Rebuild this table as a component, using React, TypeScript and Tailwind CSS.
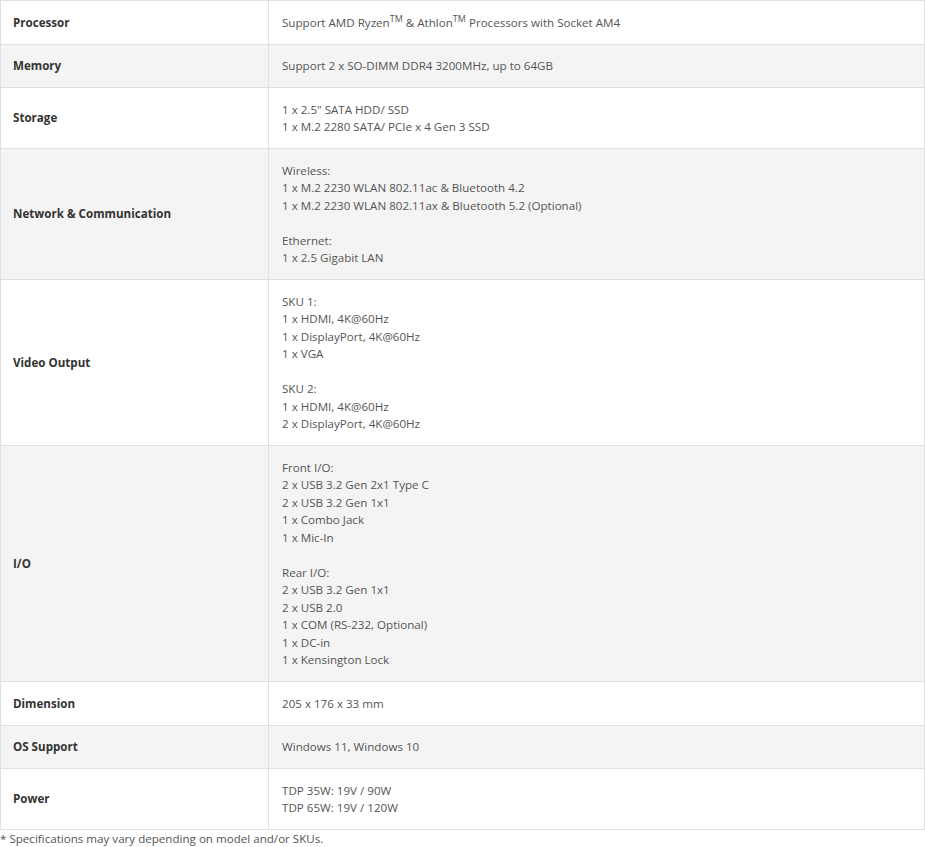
import React from "react";

type Spec = { label: string; value: React.ReactNode[] };

const specs: Spec[] = [
  {
    label: "Processor",
    value: [
      <>
        Support AMD Ryzen<sup className="text-[9px] leading-none">TM</sup> &amp; Athlon
        <sup className="text-[9px] leading-none">TM</sup> Processors with Socket AM4
      </>,
    ],
  },
  { label: "Memory", value: ["Support 2 x SO-DIMM DDR4 3200MHz, up to 64GB"] },
  {
    label: "Storage",
    value: ['1 x 2.5" SATA HDD/ SSD', "1 x M.2 2280 SATA/ PCIe x 4 Gen 3 SSD"],
  },
  {
    label: "Network & Communication",
    value: [
      "Wireless:",
      "1 x M.2 2230 WLAN 802.11ac & Bluetooth 4.2",
      "1 x M.2 2230 WLAN 802.11ax & Bluetooth 5.2 (Optional)",
      "",
      "Ethernet:",
      "1 x 2.5 Gigabit LAN",
    ],
  },
  {
    label: "Video Output",
    value: [
      "SKU 1:",
      "1 x HDMI, 4K@60Hz",
      "1 x DisplayPort, 4K@60Hz",
      "1 x VGA",
      "",
      "SKU 2:",
      "1 x HDMI, 4K@60Hz",
      "2 x DisplayPort, 4K@60Hz",
    ],
  },
  {
    label: "I/O",
    value: [
      "Front I/O:",
      "2 x USB 3.2 Gen 2x1 Type C",
      "2 x USB 3.2 Gen 1x1",
      "1 x Combo Jack",
      "1 x Mic-In",
      "",
      "Rear I/O:",
      "2 x USB 3.2 Gen 1x1",
      "2 x USB 2.0",
      "1 x COM (RS-232, Optional)",
      "1 x DC-in",
      "1 x Kensington Lock",
    ],
  },
  { label: "Dimension", value: ["205 x 176 x 33 mm"] },
  { label: "OS Support", value: ["Windows 11, Windows 10"] },
  { label: "Power", value: ["TDP 35W: 19V / 90W", "TDP 65W: 19V / 120W"] },
];

export default function App() {
  return (
    <div
      className="w-[925px] bg-white text-[11.6px] leading-[17.5px] text-[#555]"
      style={{ fontFamily: '"Open Sans", "Noto Sans", sans-serif' }}
    >
      <table className="w-full border-collapse">
        <tbody>
          {specs.map((s, i) => (
            <tr key={s.label} className={i % 2 === 1 ? "bg-[#f4f4f4]" : "bg-white"}>
              <td className="w-[268px] border border-[#e0e0e0] px-[12px] py-[12.5px] align-middle font-bold text-[#333]">
                {s.label}
              </td>
              <td className="border border-[#e0e0e0] px-[13px] py-[12.5px] align-middle">
                {s.value.map((line, j) => (
                  <div key={j} className="h-[17.5px]">
                    {line}
                  </div>
                ))}
              </td>
            </tr>
          ))}
        </tbody>
      </table>
      {/* Footnote */}
      <p>* Specifications may vary depending on model and/or SKUs.</p>
    </div>
  );
}
